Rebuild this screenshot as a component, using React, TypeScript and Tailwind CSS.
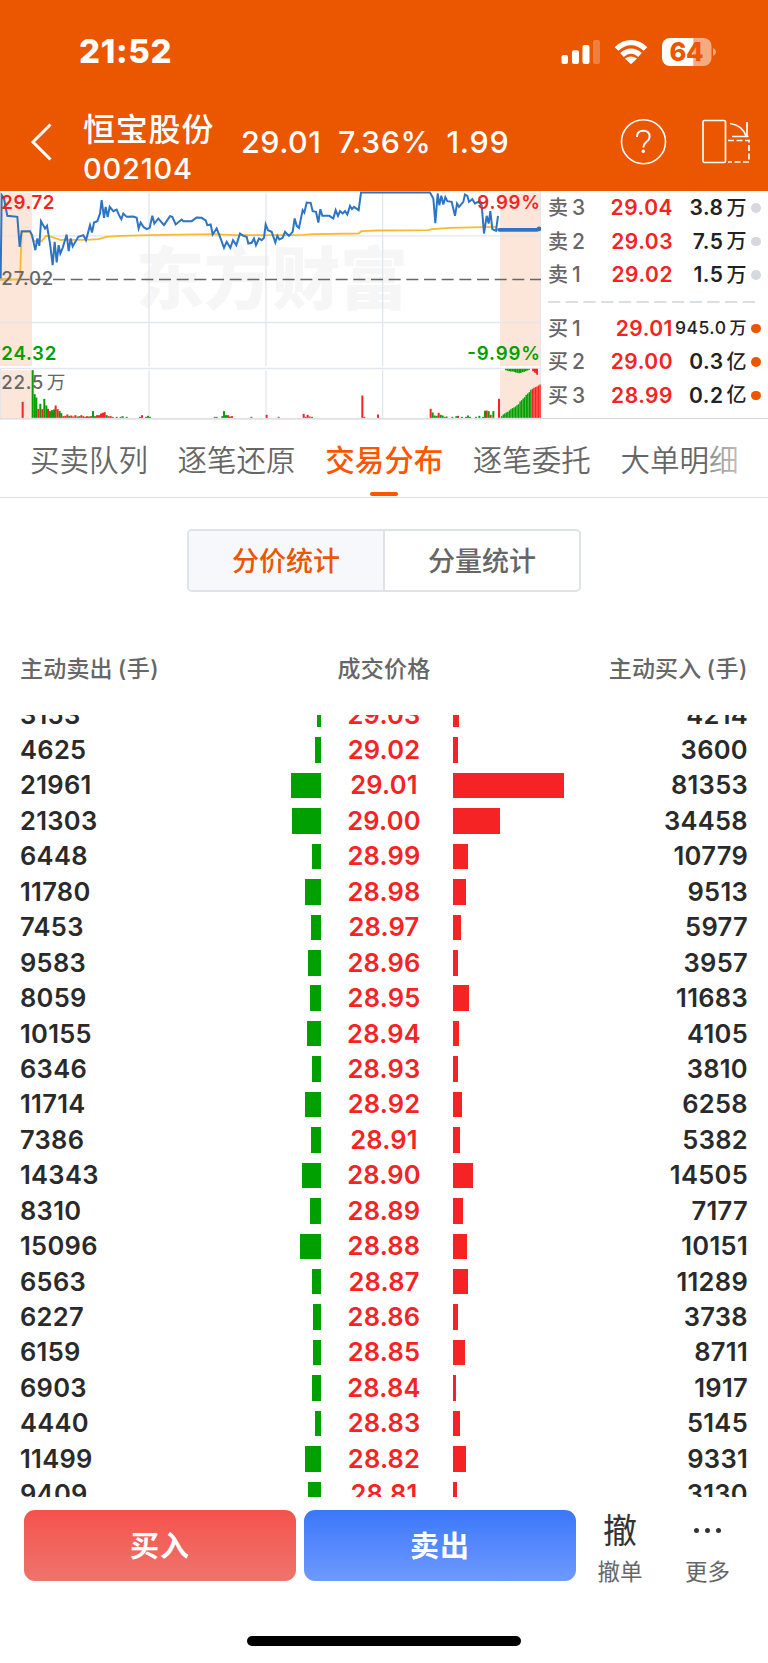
import clsx from "clsx";

interface Trade {
  sell: number;
  price: string;
  buy: number;
}

interface Quote {
  label: string;
  price: string;
  amount: string;
  small?: boolean;
}

const TRADES: Trade[] = [
  { sell: 3153, price: "29.03", buy: 4214 },
  { sell: 4625, price: "29.02", buy: 3600 },
  { sell: 21961, price: "29.01", buy: 81353 },
  { sell: 21303, price: "29.00", buy: 34458 },
  { sell: 6448, price: "28.99", buy: 10779 },
  { sell: 11780, price: "28.98", buy: 9513 },
  { sell: 7453, price: "28.97", buy: 5977 },
  { sell: 9583, price: "28.96", buy: 3957 },
  { sell: 8059, price: "28.95", buy: 11683 },
  { sell: 10155, price: "28.94", buy: 4105 },
  { sell: 6346, price: "28.93", buy: 3810 },
  { sell: 11714, price: "28.92", buy: 6258 },
  { sell: 7386, price: "28.91", buy: 5382 },
  { sell: 14343, price: "28.90", buy: 14505 },
  { sell: 8310, price: "28.89", buy: 7177 },
  { sell: 15096, price: "28.88", buy: 10151 },
  { sell: 6563, price: "28.87", buy: 11289 },
  { sell: 6227, price: "28.86", buy: 3738 },
  { sell: 6159, price: "28.85", buy: 8711 },
  { sell: 6903, price: "28.84", buy: 1917 },
  { sell: 4440, price: "28.83", buy: 5145 },
  { sell: 11499, price: "28.82", buy: 9331 },
  { sell: 9409, price: "28.81", buy: 3130 },
];

const ASKS: Quote[] = [
  { label: "卖3", price: "29.04", amount: "3.8万" },
  { label: "卖2", price: "29.03", amount: "7.5万" },
  { label: "卖1", price: "29.02", amount: "1.5万" },
];

const BIDS: Quote[] = [
  { label: "买1", price: "29.01", amount: "945.0万", small: true },
  { label: "买2", price: "29.00", amount: "0.3亿" },
  { label: "买3", price: "28.99", amount: "0.2亿" },
];

const TABS = ["买卖队列", "逐笔还原", "交易分布", "逐笔委托", "大单明细"];

const RED = "#f52323";
const GREEN = "#00a000";

// pixels per traded lot
const BAR_SCALE = 0.00136;

const PRICE_LINE =
  "2,280 5,30 12,40 22,92 52,95 59,185 65,138 90,138 96,150 106,195 112,160 118,182 123,108 135,130 141,122 150,175 158,240 164,170 170,232 176,180 181,205 188,188 200,148 206,198 212,160 218,184 235,155 250,150 258,165 270,120 276,142 282,112 292,108 300,85 305,45 312,98 317,65 323,96 329,65 340,78 350,73 358,92 364,102 370,85 380,95 400,94 410,98 416,130 422,112 430,125 440,132 449,128 457,92 463,115 475,100 492,120 510,93 517,95 527,118 545,103 550,108 575,108 590,97 605,98 617,106 622,120 632,118 638,148 650,130 660,155 672,188 680,170 691,188 699,165 709,180 720,145 730,152 740,155 745,175 755,173 762,160 768,180 777,160 785,165 792,158 797,118 804,135 815,140 826,172 832,152 838,163 848,158 855,140 867,152 878,140 884,100 890,122 897,128 908,75 913,82 920,52 932,53 938,78 948,80 955,112 961,72 967,92 988,92 1000,100 1007,75 1014,92 1020,78 1028,85 1035,78 1042,88 1050,62 1056,72 1062,65 1076,75 1083,22 1290,22 1300,40 1306,114 1313,25 1318,60 1324,32 1330,58 1336,36 1342,48 1355,50 1365,92 1371,55 1377,65 1390,50 1395,28 1402,32 1407,50 1417,42 1425,55 1435,50 1445,60 1452,145 1460,92 1466,115 1471,78 1477,132 1488,137 1494,92";

const AVERAGE_LINE =
  "0,283 60,283 65,140 90,140 102,168 125,168 138,152 155,155 180,164 260,164 295,162 320,155 360,152 450,150 640,147 700,150 870,150 910,149 940,147 1075,145 1085,138 1130,136 1285,135 1295,132 1350,128 1450,126 1490,125";

// [x, height, rising]
const VOLUME: [number, number, boolean][] = [
  [65, 48, true],
  [95, 143, false],
  [101, 71, false],
  [106, 61, false],
  [112, 27, true],
  [118, 42, false],
  [124, 26, true],
  [130, 57, false],
  [136, 37, false],
  [141, 27, true],
  [147, 20, false],
  [153, 23, false],
  [159, 25, false],
  [164, 37, true],
  [170, 26, true],
  [176, 20, false],
  [181, 14, false],
  [187, 5, true],
  [193, 6, true],
  [199, 10, true],
  [205, 6, false],
  [211, 7, true],
  [217, 4, true],
  [223, 8, true],
  [229, 4, true],
  [235, 5, false],
  [241, 8, true],
  [247, 5, true],
  [253, 3, false],
  [258, 5, true],
  [264, 4, false],
  [270, 5, true],
  [276, 20, false],
  [282, 5, false],
  [288, 8, true],
  [294, 8, true],
  [300, 13, true],
  [306, 15, true],
  [311, 17, true],
  [317, 8, false],
  [323, 5, true],
  [329, 5, true],
  [335, 3, false],
  [347, 3, true],
  [359, 3, false],
  [365, 5, false],
  [377, 3, false],
  [417, 3, true],
  [423, 8, true],
  [435, 3, false],
  [441, 6, false],
  [447, 3, false],
  [641, 3, false],
  [647, 3, false],
  [664, 5, false],
  [669, 20, false],
  [675, 8, false],
  [681, 8, true],
  [687, 4, false],
  [693, 5, true],
  [751, 3, true],
  [797, 9, true],
  [833, 3, true],
  [908, 12, true],
  [914, 3, true],
  [920, 9, true],
  [926, 4, true],
  [933, 3, false],
  [1084, 67, true],
  [1090, 3, true],
  [1131, 10, true],
  [1289, 27, true],
  [1295, 16, false],
  [1301, 7, false],
  [1307, 6, false],
  [1313, 15, true],
  [1319, 9, false],
  [1325, 7, false],
  [1331, 3, true],
  [1337, 4, false],
  [1354, 3, false],
  [1366, 5, false],
  [1371, 6, true],
  [1383, 3, false],
  [1395, 3, true],
  [1401, 7, false],
  [1407, 3, false],
  [1425, 3, false],
  [1435, 6, false],
  [1446, 3, false],
  [1452, 21, false],
  [1457, 22, true],
  [1463, 20, false],
  [1469, 9, true],
  [1477, 20, false],
  [1494, 57, true],
];

const AUCTION = [
  5, 10, 13, 16, 18, 22, 26, 29, 31, 34, 38, 41, 49, 53, 58, 62, 69, 73, 77, 84, 87, 90, 92, 94, 97, 100,
];

const AUCTION_DIFF = [4, 6, 7, 8, 8, 9, 11, 12, 13, 12, 10, 9, 7, 5, 3];

function StatusBar() {
  return (
    <div className="flex h-[93px] items-end justify-between pr-[52px] pl-[79px] text-white">
      <div className="mb-[22px] text-[33px] leading-10 font-extrabold tracking-[0.7px]">21:52</div>
      <svg className="mb-[25px]" width="156" height="32" viewBox="560 35 156 32">
        <g fill="#fff">
          <rect x="561.5" y="54" width="6.5" height="9" rx="2" />
          <rect x="572" y="49.3" width="7" height="13.7" rx="2" />
          <rect x="582.5" y="44" width="7" height="19" rx="2" />
          <rect x="593" y="39" width="7" height="24" rx="2" opacity="0.25" />
          <path d="M625 57.5Q631 53.5 637 57.5L632.2 62.2Q631 63.3 629.8 62.2Z" />
          <path d="M693.5 37H703.5A8 8 0 0 1 711.5 45V57A8 8 0 0 1 703.5 65H693.5Z" opacity="0.5" />
          <path d="M670 37H693.5V65H670A8 8 0 0 1 662 57V45A8 8 0 0 1 670 37Z" />
          <path d="M713 47Q716 48.5 716 51T713 55Z" opacity="0.5" />
        </g>
        <g fill="none" stroke="#fff" strokeWidth="5.2">
          <path d="M616.5 48Q623 41.7 631 41.7T645.5 48" />
          <path d="M622 54Q626 50.2 631 50.2T640 54" />
        </g>
        <text x="669.5" y="60" fontSize="25.5" fontWeight="800" fill="#eb5600" textLength="34">
          64
        </text>
      </svg>
    </div>
  );
}

function NavBar() {
  return (
    <div className="flex h-[97.5px] items-center text-white">
      <svg className="ml-[30px]" width="24" height="38" viewBox="0 0 24 38" fill="none" stroke="#fff" strokeWidth="3">
        <path d="M20.5 1.5L3 19L20.5 36.5" />
      </svg>
      <div className="mt-[15px] ml-[29px] w-[158px] whitespace-nowrap">
        <div className="text-[32px] leading-[39px] font-medium tracking-[0.8px]">恒宝股份</div>
        <div className="text-[29px] leading-[39px] font-medium tracking-[0.8px]">002104</div>
      </div>
      <div className="flex text-[30.5px] font-medium whitespace-nowrap">
        <span className="w-[97px] tracking-[0.5px]">29.01</span>
        <span className="w-[108.5px] tracking-[0.5px]">7.36%</span>
        <span className="tracking-[0.7px]">1.99</span>
      </div>
      <svg className="mr-[17px] ml-auto" width="132" height="48" viewBox="619 118 132 48" fill="none" stroke="#fff">
        <circle cx="643.5" cy="141.7" r="22" strokeWidth="1.6" />
        <path
          d="M637 137Q637 130.7 643.3 130.7T649.6 136.5Q649.6 139.5 646.3 142Q643.3 144.5 643.3 147.5"
          strokeWidth="1.9"
        />
        <circle cx="643.3" cy="151.2" r="1.7" fill="#fff" stroke="none" />
        <rect x="703" y="120.5" width="22.5" height="42" rx="1.5" strokeWidth="1.7" />
        <path d="M730 123.5Q742 125 746 136M747 122V136.5M732 136.5H748.5" strokeWidth="1.7" />
        <path d="M728 140.5H749V162H728" strokeWidth="1.7" strokeDasharray="6 2.5" />
      </svg>
    </div>
  );
}

function MinuteChart() {
  return (
    <svg className="shrink-0" width="541" height="229" viewBox="0 17.5 1623 687">
      <g fill="#fce6da">
        <rect x="0" y="24" width="96" height="519" />
        <rect x="0" y="555" width="96" height="144" />
        <rect x="1500" y="24" width="123" height="519" />
        <rect x="1500" y="555" width="123" height="144" />
      </g>
      <text x="408" y="358" fontSize="204" fontWeight="900" fill="#f6f6f6">
        东方财富
      </text>
      <g stroke="#e4e6ed" strokeWidth="4" fill="none">
        <path d="M0 152H1623M0 412H1623M0 550H1623" />
        <path d="M447 24V543M798 24V543M1148 24V543M447 555V699M798 555V699M1148 555V699" />
        <path d="M1621 18V700M1 550V700" />
      </g>
      <path d="M0 283H1623" stroke="#666" strokeWidth="4" strokeDasharray="36 17" />
      {VOLUME.map(([x, h, up]) => (
        <rect key={x} x={x} y={698 - h} width="6" height={h} fill={up ? RED : GREEN} />
      ))}
      {AUCTION.map((h, i) => (
        <rect key={i} x={1503 + i * 4.6} y={698 - h} width="4.3" height={h} fill={i < 20 ? GREEN : RED} />
      ))}
      {AUCTION_DIFF.map((h, i) => (
        <rect key={i} x={1515 + i * 5} y="551" width="5" height={h} fill={GREEN} />
      ))}
      <path d="M1596 551H1614V569H1609L1608 563H1603L1602 558H1597Z" fill={RED} />
      <polyline points={AVERAGE_LINE} fill="none" stroke="#fdb92e" strokeWidth="5.5" />
      <polyline points={PRICE_LINE} fill="none" stroke="#2c74c4" strokeWidth="6" />
      <path d="M1497 134H1612" stroke="#2c74c4" strokeWidth="11" strokeLinecap="round" />
      <circle cx="1617" cy="131" r="7" fill="#2c74c4" />
      <g fontSize="56" fontWeight="600">
        <text x="4" y="73" fill={RED} textLength="159">29.72</text>
        <text x="4" y="299" fill="#666" fontWeight="500" textLength="156">27.02</text>
        <text x="4" y="526" fill={GREEN} textLength="165">24.32</text>
        <text x="4" y="611" fill="#666" fontWeight="500" textLength="126">22.5</text>
        <text x="140" y="611" fill="#666" fontWeight="400">万</text>
        <text x="1432" y="73" fill={RED} textLength="188">9.99%</text>
        <text x="1402" y="526" fill={GREEN} textLength="218">-9.99%</text>
      </g>
      <path d="M0 701H1623" stroke="#d4d6de" strokeWidth="4" />
    </svg>
  );
}

function QuoteRow({ quote, bid }: { quote: Quote; bid?: boolean }) {
  return (
    <div className="flex h-[33.5px] items-center text-[21px] font-semibold whitespace-nowrap">
      <span className="w-[45px] text-[20px] font-medium text-[#666]">
        {quote.label[0]}
        <span className="ml-[4px] text-[21px]">{quote.label[1]}</span>
      </span>
      <span className="w-[80px] text-right tracking-[0.5px] text-[#f52323]">{quote.price}</span>
      <span
        className={clsx(
          "flex w-[74px] items-center justify-end text-[#222]",
          quote.small ? "text-[17.5px] font-medium tracking-[0.5px]" : "tracking-[0.5px]"
        )}
      >
        {quote.amount.slice(0, -1)}
        <span className={clsx("ml-[3px] font-medium", quote.small ? "text-[17px]" : "text-[20px]")}>
          {quote.amount.slice(-1)}
        </span>
      </span>
      <span className={clsx("ml-[4px] size-[9.5px] rounded-full", bid ? "bg-[#eb5600]" : "bg-[#d5d8df]")} />
    </div>
  );
}

function OrderBook() {
  return (
    <div className="flex-1 border-b border-[#d4d6de] pt-[0.5px] pl-[7px]">
      {ASKS.map((q) => (
        <QuoteRow key={q.label} quote={q} />
      ))}
      <svg className="block" width="210" height="20" viewBox="0 0 210 20">
        <path d="M0 10H208" stroke="#d0d3db" strokeWidth="1.7" strokeDasharray="12.3 5.4" />
      </svg>
      {BIDS.map((q) => (
        <QuoteRow key={q.label} quote={q} bid />
      ))}
    </div>
  );
}

function TabNav() {
  return (
    <div className="relative flex h-[78.5px] shrink-0 justify-between border-b border-[#dcdfe5] pr-[29.5px] pl-[30px]">
      {TABS.map((tab, i) => (
        <div
          key={tab}
          className={clsx(
            "relative flex items-center pt-[4px] text-[29.5px]",
            i === 2 ? "font-medium text-[#ff5500]" : "font-[350] text-[#666]"
          )}
        >
          {tab}
          {i === 2 && (
            <span className="absolute bottom-[1px] left-1/2 h-1 w-7 -translate-x-1/2 rounded-full bg-[#ff5500]" />
          )}
        </div>
      ))}
      <div className="absolute top-0 right-0 h-full w-[61px] bg-linear-to-r from-white/25 to-white/90" />
    </div>
  );
}

function TradeRow({ trade }: { trade: Trade }) {
  return (
    <div className="flex h-[35.45px] items-center text-[25.5px] font-semibold text-[#2a2a2a]">
      <span className="w-[201px] tracking-[0.3px]">{trade.sell}</span>
      <div className="flex w-[100px] justify-end">
        <div className="h-[25.5px] bg-[#00a000]" style={{ width: trade.sell * BAR_SCALE }} />
      </div>
      <span className="w-[126px] text-center tracking-[0.2px] text-[#f52323]">{trade.price}</span>
      <div className="ml-[6px] w-[115px]">
        <div className="h-[25.5px] bg-[#f52323]" style={{ width: trade.buy * BAR_SCALE }} />
      </div>
      <span className="flex-1 text-right tracking-[0.3px]">{trade.buy}</span>
    </div>
  );
}

function ActionBar() {
  return (
    <div className="flex h-[84px] shrink-0 pt-[13.5px] pl-6">
      <button className="h-[71px] w-[272px] rounded-[11px] bg-linear-to-b from-[#f5524c] to-[#ee736c] pt-[3px] text-[29px] font-bold tracking-[1px] text-white">
        买入
      </button>
      <button className="ml-[8px] h-[71px] w-[272px] rounded-[11px] bg-linear-to-b from-[#3b77fa] to-[#6e99ff] pt-[3px] text-[29px] font-bold tracking-[1px] text-white">
        卖出
      </button>
      <div className="ml-[17px] flex w-[54px] flex-col items-center">
        <div className="h-[41px] shrink-0 text-[34px] leading-[41px] text-[#333]">撤</div>
        <div className="mt-[5.5px] text-[22.5px] leading-[30px] text-[#666]">撤单</div>
      </div>
      <div className="ml-[33.5px] flex w-[54px] flex-col items-center">
        <div className="flex h-[41px] shrink-0 items-center gap-[5.5px]">
          <i className="size-[5.5px] rounded-full bg-[#333]" />
          <i className="size-[5.5px] rounded-full bg-[#333]" />
          <i className="size-[5.5px] rounded-full bg-[#333]" />
        </div>
        <div className="mt-[5.5px] text-[22.5px] leading-[30px] text-[#666]">更多</div>
      </div>
    </div>
  );
}

export default function App() {
  return (
    <div
      lang="zh-CN"
      className="flex h-[1663px] w-[768px] flex-col overflow-hidden bg-white font-[Inter,'Noto_Sans_CJK_SC',sans-serif]"
    >
      <header className="h-[190.5px] shrink-0 bg-[#eb5600]">
        <StatusBar />
        <NavBar />
      </header>
      <div className="flex h-[228.5px] shrink-0">
        <MinuteChart />
        <OrderBook />
      </div>
      <TabNav />
      <div className="mx-auto mt-[31px] flex h-[63px] w-[394px] shrink-0 overflow-hidden rounded-[5px] border-2 border-[#dfe2e7] text-[27px] font-medium">
        <div className="flex flex-1 items-center justify-center border-r-2 border-[#dfe2e7] bg-[#f6f8fb] pt-[5px] text-[#eb5600]">
          分价统计
        </div>
        <div className="flex flex-1 items-center justify-center pt-[5px] text-[#666]">分量统计</div>
      </div>
      <div className="mt-[61px] flex h-[34px] shrink-0 items-center justify-between px-[20px] text-[23px] font-medium text-[#666]">
        <span className="w-[200px] tracking-[0.2px]">
          主动卖出<span className="ml-[5px] tracking-[0.5px]">(手)</span>
        </span>
        <span className="tracking-[0.2px]">成交价格</span>
        <span className="w-[200px] text-right tracking-[0.2px]">
          主动买入<span className="ml-[5px] tracking-[0.5px]">(手)</span>
        </span>
      </div>
      <div className="mt-[28.5px] h-[781.5px] shrink-0 overflow-hidden px-[20px]">
        <div className="-mt-[18px]">
          {TRADES.map((t) => (
            <TradeRow key={t.price} trade={t} />
          ))}
        </div>
      </div>
      <ActionBar />
      <div className="mx-auto mt-[55.5px] h-[9.5px] w-[274px] shrink-0 rounded-full bg-black" />
    </div>
  );
}
